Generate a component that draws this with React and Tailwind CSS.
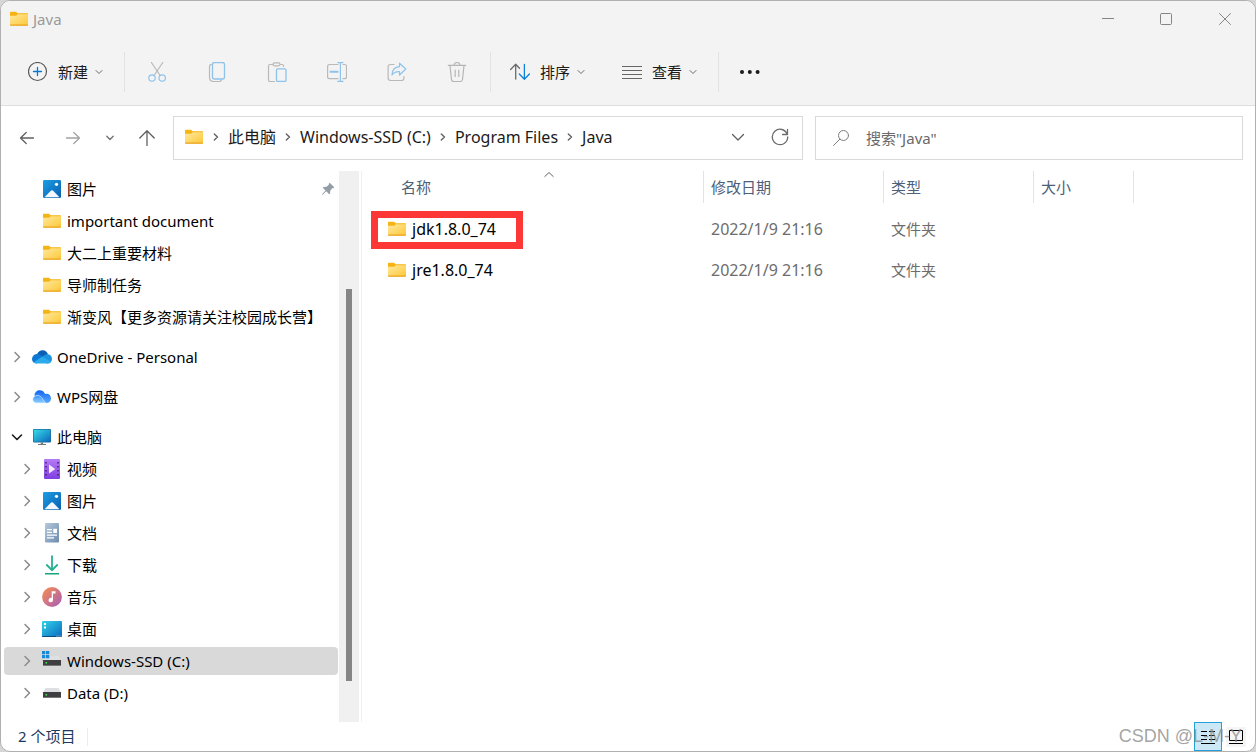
import React from "react";

/* ---------- line icons ---------- */

function Stroke({ size = 20, width = 1, className = "", children }) {
  return (
    <svg
      width={size}
      height={size}
      viewBox={`0 0 ${size} ${size}`}
      fill="none"
      stroke="currentColor"
      strokeWidth={width}
      strokeLinecap="round"
      strokeLinejoin="round"
      aria-hidden="true"
      className={`shrink-0 ${className}`}
    >
      {children}
    </svg>
  );
}

const SmallChevron = () => (
  <Stroke size={8} className="text-[#6b6b6b]">
    <path d="M1 2.5 4 5.5 7 2.5" />
  </Stroke>
);

const NewIcon = () => (
  <Stroke>
    <circle cx="9.5" cy="9.5" r="9" stroke="#5a5a5a" strokeWidth="1.2" />
    <path d="M9.5 5.500v8M5.500 9.500h8" stroke="#0a78cf" strokeWidth="1.3" />
  </Stroke>
);

const CutIcon = () => (
  <Stroke>
    <path d="M4.4.5 13 13.2M15.8.5 7.200 13.2" stroke="#b5b5b5" strokeWidth="1.1" />
    <circle cx="5" cy="16" r="3.200" stroke="#8ec3ec" strokeWidth="1.2" />
    <circle cx="15.200" cy="16" r="3.200" stroke="#8ec3ec" strokeWidth="1.2" />
  </Stroke>
);

const CopyIcon = () => (
  <Stroke>
    <path d="M4.500 2.300C3 2.500 2.500 3.300 2.500 4.500V15c0 3 1.500 4.500 4.200 4.500h5.500c1.200 0 2-.5 2.300-1.800" stroke="#b9b9b9" strokeWidth="1.200" />
    <rect x="5.500" y="0.500" width="12" height="16.500" rx="2" stroke="#8ec3ec" strokeWidth="1.300" />
  </Stroke>
);

const PasteIcon = () => (
  <Stroke>
    <path d="M6 2.500H3c-1 0-1.500.6-1.500 1.500v14c0 .9.6 1.500 1.500 1.500h4.500M13.500 2.500H15c1 0 1.500.6 1.500 1.300v.7" stroke="#b9b9b9" strokeWidth="1.200" />
    <rect x="6" y="0.800" width="7" height="3" rx="1.500" stroke="#b9b9b9" strokeWidth="1.200" />
    <rect x="9.500" y="6.800" width="9.500" height="12.700" rx="1.200" stroke="#8ec3ec" strokeWidth="1.300" />
  </Stroke>
);

const RenameIcon = () => (
  <Stroke>
    <path d="M11 2.500H2.500C1.300 2.500.6 3.300.6 4.300v10.500c0 1.200.8 1.900 1.900 1.900H11M16 2.500h1.800c1 0 1.700.8 1.700 1.800v10.500c0 1.200-.7 1.900-1.700 1.900H16" stroke="#b9b9b9" strokeWidth="1.200" />
    <path d="M3.500 9.700h7.200" stroke="#8ec3ec" strokeWidth="2" />
    <path d="M13.400.6v18.800M10.800.6H16M10.800 19.400H16" stroke="#8ec3ec" strokeWidth="1.200" />
  </Stroke>
);

const ShareIcon = () => (
  <Stroke>
    <path d="M7 2.500H3.500c-1.600 0-2.400.9-2.400 2.300v11c0 1.700.9 2.700 2.500 2.700h10.800c1.700 0 2.600-1 2.600-2.500v-1.500" stroke="#b9b9b9" strokeWidth="1.200" />
    <path d="M12.500 1.200 18.800 7l-6.300 6v-3.300c-3.800-.2-6 1-7.500 3.300.2-4.700 2.800-8 7.500-8.300Z" stroke="#8ec3ec" strokeWidth="1.200" />
  </Stroke>
);

const TrashIcon = () => (
  <Stroke>
    <path d="M1.300 3.300h17.400M7 3C7.200 1.400 8.500.5 10 .5s2.800.9 3 2.500M3 3.500l1.500 14c.1 1.200 1 2 2.200 2h6.600c1.200 0 2-.8 2.200-2L17 3.500M8.200 8v6.500M11.800 8v6.500" stroke="#b5b5b5" strokeWidth="1.200" />
  </Stroke>
);

const SortIcon = () => (
  <Stroke>
    <path d="M5.700 17V2.500M.6 7.500 5.700 2.300 9.500 6.200" stroke="#6a6a6a" strokeWidth="1.300" />
    <path d="M14.400 2.500V17M9.300 12l5.100 5.200L19.400 12" stroke="#0f80d7" strokeWidth="1.300" />
  </Stroke>
);

const ListIcon = () => (
  <Stroke>
    <path d="M0 4.500h20M0 8.500h20M0 12.500h20M0 16.500h20" stroke="#666" strokeWidth="1" strokeLinecap="butt" />
  </Stroke>
);

const MoreIcon = () => (
  <svg width="22" height="6" viewBox="0 0 22 6" fill="#1b1b1b" aria-hidden="true">
    <circle cx="3" cy="3" r="2" />
    <circle cx="10.800" cy="3" r="2" />
    <circle cx="18.600" cy="3" r="2" />
  </svg>
);

/* ---------- file type icons ---------- */

const FolderIcon = () => (
  <svg width="20" height="20" viewBox="0 0 20 20" aria-hidden="true" className="shrink-0">
    <defs>
      <linearGradient id="folderFace" x1="0" y1="0" x2="1" y2="1">
        <stop offset="0" stopColor="#ffe8a0" />
        <stop offset="1" stopColor="#fcc836" />
      </linearGradient>
    </defs>
    <path d="M1 3.600Q1 2.800 1.800 2.800H7l1.700 1.500h9.500q.8 0 .8.800V9H1Z" fill="#f5b414" />
    <path d="M1 6.800h6.200L8.800 5.200H19v10.600q0 .7-.7.7H1.700Q1 16.500 1 15.800Z" fill="url(#folderFace)" />
    <path d="M1 15.500h18v.3q0 .9-.8.900H1.800q-.8 0-.8-.9Z" fill="#eaa41f" />
  </svg>
);

const PictureIcon = () => (
  <svg width="20" height="20" viewBox="0 0 20 20" aria-hidden="true" className="shrink-0">
    <defs>
      <linearGradient id="pictureSky" x1="0" y1="0" x2="1" y2="1">
        <stop offset="0" stopColor="#1d9ee4" />
        <stop offset="1" stopColor="#0860b0" />
      </linearGradient>
    </defs>
    <rect x="1" y="1" width="18" height="18" rx="1.300" fill="url(#pictureSky)" />
    <path d="m2.500 18.300 6.600-6.700q.9-.9 1.800 0l6.600 6.700Z" fill="#f2f8fd" />
    <circle cx="14.500" cy="5.300" r="1.600" fill="#fff" />
  </svg>
);

const OneDriveIcon = () => (
  <svg width="20" height="20" viewBox="0 0 20 20" aria-hidden="true" className="shrink-0">
    <path d="M5 7.300C6.300 4.500 8.500 3.200 10.800 3.300c2.500.1 4.500 1.600 5.200 4l-6 3Z" fill="#0a5eb4" />
    <path d="M0 12.200C0 9 2.500 6.800 5.300 6.900c1 0 2 .4 2.700.9l6 3.700-9.500 4.900C1.800 16.300 0 14.500 0 12.200Z" fill="#0f78d4" />
    <path d="M10.500 9.300 14 7.500c3.300-.8 6 1.200 6 4.400 0 2.500-1.800 4.500-4.300 4.500L9 15Z" fill="#1c93df" />
    <path d="m1.500 15.200 8.800-5.400 8.800 5c-.8 1-2 1.600-3.400 1.600H4.700c-1.300 0-2.400-.4-3.200-1.200Z" fill="#2cabec" />
  </svg>
);

const WpsCloudIcon = () => (
  <svg width="20" height="20" viewBox="0 0 20 20" aria-hidden="true" className="shrink-0">
    <defs>
      <linearGradient id="wpsBack" x1="0" y1="0" x2="0" y2="1">
        <stop offset="0" stopColor="#1566f0" />
        <stop offset="1" stopColor="#5aabff" />
      </linearGradient>
      <linearGradient id="wpsFront" x1="0" y1="0" x2="0" y2="1">
        <stop offset="0" stopColor="#3e92fb" />
        <stop offset="1" stopColor="#8bd0ff" />
      </linearGradient>
    </defs>
    <path d="M2.500 8.500C2.500 5.300 5 3.300 7.800 3.300c2.700 0 4.400 1.500 5.200 3.700 3.500-.8 6 1.300 6 4.400 0 2.700-1.800 4.600-4.500 4.600H10Z" fill="url(#wpsBack)" />
    <path d="M4.800 8.400c2.200-.2 3.800.8 5 2.400l3.700 5.200H4.700C2.300 16 .8 14.400.8 12.300c0-2 1.700-3.700 4-3.900Z" fill="url(#wpsFront)" stroke="#eaf4ff" strokeWidth=".6" />
  </svg>
);

const ComputerIcon = () => (
  <svg width="20" height="20" viewBox="0 0 20 20" aria-hidden="true" className="shrink-0">
    <defs>
      <linearGradient id="screenGlow" x1="0" y1="0" x2="1" y2="1">
        <stop offset="0" stopColor="#37dce8" />
        <stop offset="1" stopColor="#0c67bd" />
      </linearGradient>
    </defs>
    <rect x="1" y="2" width="18" height="13.500" rx="1" fill="#1c6c9c" />
    <rect x="1.700" y="2.700" width="16.600" height="12" fill="url(#screenGlow)" />
    <path d="M8.800 15.500h2.400V17H14v1H6v-1h2.800Z" fill="#777" />
  </svg>
);

const VideoIcon = () => (
  <svg width="20" height="20" viewBox="0 0 20 20" aria-hidden="true" className="shrink-0">
    <defs>
      <linearGradient id="filmBody" x1="0" y1="0" x2="0" y2="1">
        <stop offset="0" stopColor="#b57bf5" />
        <stop offset="1" stopColor="#7f3ee0" />
      </linearGradient>
    </defs>
    <rect x="2" y="0" width="16" height="20" rx="1" fill="url(#filmBody)" />
    <path d="M3.200 3h1.600v1.600H3.200Zm0 4h1.600v1.600H3.200Zm0 4h1.600v1.600H3.200Zm0 4h1.600v1.600H3.200ZM15.200 3h1.600v1.600h-1.600Zm0 4h1.600v1.600h-1.600Zm0 4h1.600v1.600h-1.600Zm0 4h1.600v1.600h-1.600Z" fill="#46236f" />
    <path d="M7 5.500 13.300 10 7 14.500Z" fill="#f3eafd" />
  </svg>
);

const DocumentIcon = () => (
  <svg width="20" height="20" viewBox="0 0 20 20" aria-hidden="true" className="shrink-0">
    <defs>
      <linearGradient id="paperBody" x1="0" y1="0" x2="1" y2="1">
        <stop offset="0" stopColor="#b5c9dc" />
        <stop offset="1" stopColor="#6d8bad" />
      </linearGradient>
    </defs>
    <rect x="3" y="0" width="14" height="19.500" rx="1" fill="url(#paperBody)" />
    <path d="M5 6h5v1.200H5Zm0 2.800h5V10H5Zm6.300-3H15V10h-3.700ZM5 11.600h10v1.200H5Zm0 2.600h7v1.200H5Z" fill="#fff" />
  </svg>
);

const DownloadIcon = () => (
  <svg width="20" height="20" viewBox="0 0 20 20" aria-hidden="true" className="shrink-0" fill="none" strokeWidth="1.800">
    <path d="M10 .5v14M4.300 9.500 10 15.200 15.700 9.500" stroke="#22b191" />
    <path d="M3 18.800h14" stroke="#17a57f" strokeWidth="1.600" />
  </svg>
);

const MusicIcon = () => (
  <svg width="20" height="20" viewBox="0 0 20 20" aria-hidden="true" className="shrink-0">
    <defs>
      <linearGradient id="discBody" x1="0" y1="0" x2="1" y2="1">
        <stop offset="0.100" stopColor="#f28a58" />
        <stop offset="1" stopColor="#a85bbb" />
      </linearGradient>
    </defs>
    <circle cx="10" cy="10" r="9.900" fill="url(#discBody)" />
    <path d="M9.700 4.300h3.800v2.200H11v6.600a2.200 2.200 0 1 1-1.300-2Z" fill="#fff" />
  </svg>
);

const DesktopIcon = () => (
  <svg width="20" height="20" viewBox="0 0 20 20" aria-hidden="true" className="shrink-0">
    <defs>
      <linearGradient id="deskBody" x1="0" y1="0" x2="1" y2="1">
        <stop offset="0" stopColor="#32d4e8" />
        <stop offset="1" stopColor="#0a69c0" />
      </linearGradient>
    </defs>
    <rect y="2" width="20" height="16" rx="1" fill="url(#deskBody)" />
    <path d="M0 17h20v.1q0 .9-.9.900H.9q-.9 0-.9-.9Z" fill="#0c4a7e" />
    <path d="M2 4h2v2H2Zm0 3.500h2v2H2Z" fill="#fff" />
    <path d="M14.500 16.700h1v.8h-1Zm2 0h1v.8h-1Zm2 0h.8v.8h-.8Z" fill="#fff" />
  </svg>
);

function DriveIcon({ system = false }) {
  return (
    <svg width="20" height="20" viewBox="0 0 20 20" aria-hidden="true" className="shrink-0">
      <path d="M3.500 5h13L19 9.500H1Z" fill="#dedfe2" />
      <rect x="1" y="9" width="18" height="6" rx=".4" fill="#3f3f41" />
      <path d="M1 14h18v1H1Z" fill="#77787a" />
      <rect x="3.500" y="11" width="1.600" height="1.600" fill="#3be04b" />
      {system && (
        <g>
          <rect width="7.600" height="7.600" fill="#d9d9d9" />
          <path d="M0 0h3.300v3.300H0Zm4 0h3.300v3.300H4ZM0 4h3.300v3.300H0Zm4 0h3.300v3.300H4Z" fill="#1689d8" />
        </g>
      )}
    </svg>
  );
}

const PinIcon = () => (
  <svg width="14" height="14" viewBox="0 0 14 14" aria-hidden="true" className="shrink-0">
    <path d="M8.700.8 13.200 5.300 12.300 6.200 11.500 6 9.300 8.600 9.100 11.500 8.200 12.200 5.300 9.300 1.300 13 .8 12.500 4.500 8.500 1.800 5.800 2.600 5 5.500 4.800 8 2.500 7.800 1.700Z" fill="#929da5" />
  </svg>
);

/* ---------- title bar and command bar ---------- */

function TitleBar() {
  return (
    <header className="flex h-9 items-center justify-between">
      <div className="flex items-center gap-1 pl-2 text-[#9a9a9a]">
        <FolderIcon />
        <h1 className="leading-5">Java</h1>
      </div>
      <div className="flex self-stretch text-[#858585]">
        <button type="button" aria-label="最小化" className="flex w-[58px] items-center justify-center">
          <Stroke size={12}>
            <path d="M0 5.500h12" />
          </Stroke>
        </button>
        <button type="button" aria-label="最大化" className="flex w-[58px] items-center justify-center">
          <Stroke size={12}>
            <rect x=".5" y=".5" width="11" height="11" rx="1" />
          </Stroke>
        </button>
        <button type="button" aria-label="关闭" className="flex w-[60px] items-center justify-center">
          <Stroke size={12}>
            <path d="m.5.5 11 11M11.500.5l-11 11" />
          </Stroke>
        </button>
      </div>
    </header>
  );
}

const fileActions = [
  { label: "剪切", Icon: CutIcon },
  { label: "复制", Icon: CopyIcon },
  { label: "粘贴", Icon: PasteIcon },
  { label: "重命名", Icon: RenameIcon },
  { label: "共享", Icon: ShareIcon },
  { label: "删除", Icon: TrashIcon },
];

const Divider = () => <span className="h-10 w-px bg-[#e2e2e2]" />;

function MenuButton({ Icon, label }) {
  return (
    <button type="button" className="flex items-center text-[#1b1b1b]">
      <Icon />
      <span className="pl-[10px] pr-[7px]">{label}</span>
      <SmallChevron />
    </button>
  );
}

function CommandBar() {
  return (
    <div className="flex h-[69px] items-center border-b border-[#dedede] pt-0.5">
      <div className="pl-[27px] pr-[21px]">
        <MenuButton Icon={NewIcon} label="新建" />
      </div>
      <Divider />
      <div className="flex pl-0.5 pr-[3px]">
        {fileActions.map(({ label, Icon }) => (
          <button key={label} type="button" aria-label={label} disabled className="flex h-10 w-[60px] items-center justify-center">
            <Icon />
          </button>
        ))}
      </div>
      <Divider />
      <div className="flex gap-[37px] pl-[19px] pr-[21px]">
        <MenuButton Icon={SortIcon} label="排序" />
        <MenuButton Icon={ListIcon} label="查看" />
      </div>
      <Divider />
      <button type="button" aria-label="更多" className="ml-3 flex h-10 items-center px-2">
        <MoreIcon />
      </button>
    </div>
  );
}

/* ---------- navigation row ---------- */

const crumbs = ["此电脑", "Windows-SSD (C:)", "Program Files", "Java"];

function NavigationRow() {
  return (
    <div className="flex items-center pb-[11px] pl-[3px] pr-3 pt-[10px]">
      <button type="button" aria-label="后退" className="flex h-10 w-[46px] items-center justify-center text-[#606060]">
        <Stroke size={16} width={1.3}>
          <path d="M14.500 8H1.500M7.200 2.500 1.500 8l5.700 5.500" />
        </Stroke>
      </button>
      <button type="button" aria-label="前进" className="flex h-10 w-[46px] items-center justify-center text-[#a3a3a3]">
        <Stroke size={16} width={1.3}>
          <path d="M1.500 8h13M8.800 2.500 14.500 8l-5.700 5.500" />
        </Stroke>
      </button>
      <button type="button" aria-label="最近的位置" className="flex h-10 w-7 items-center justify-center text-[#707070]">
        <Stroke size={8} width={1.3}>
          <path d="M.8 2.300 4 5.500l3.200-3.200" />
        </Stroke>
      </button>
      <button type="button" aria-label="向上" className="mr-[3px] flex h-10 w-[46px] items-center justify-center text-[#606060]">
        <Stroke size={16} width={1.3}>
          <path d="M8 15.500V.8M.8 8 8 .8 15.200 8" />
        </Stroke>
      </button>

      <div className="flex h-11 min-w-0 flex-[606] items-center border border-[#d9d9d9] pb-0.5 pl-[10px] pr-3">
        <FolderIcon />
        <nav aria-label="地址" className="flex min-w-0 flex-1 items-center whitespace-nowrap text-base leading-5">
          {crumbs.map((crumb) => (
            <React.Fragment key={crumb}>
              <Stroke size={8} width={1.4} className="mx-2 text-[#606060]">
                <path d="M2.300 1 5.500 4 2.300 7" />
              </Stroke>
              <a href="#" className="text-[#1b1b1b]">
                {crumb}
              </a>
            </React.Fragment>
          ))}
        </nav>
        <button type="button" aria-label="以前的位置" className="flex h-10 w-10 items-center justify-center text-[#606060]">
          <Stroke size={14} width={1.3}>
            <path d="M1.500 4.500 7 10l5.500-5.500" />
          </Stroke>
        </button>
        <button type="button" aria-label="刷新" className="ml-3 flex h-10 w-5 items-center justify-center text-[#6d6d6d]">
          <Stroke size={18} width={1.300}>
            <path d="M16.300 6.500A7.700 7.700 0 1 0 16.700 9M16.500 1.500v5h-5" />
          </Stroke>
        </button>
      </div>

      <label className="ml-3 flex h-11 min-w-0 flex-[394] items-center border border-[#d9d9d9] px-4">
        <Stroke size={18} className="text-[#7d7d7d]">
          <circle cx="11.500" cy="6.500" r="5" />
          <path d="M7.800 10.200 1.500 16.500" />
        </Stroke>
        <input
          type="text"
          aria-label="搜索"
          placeholder={'搜索"Java"'}
          className="ml-4 min-w-0 flex-1 bg-transparent outline-none placeholder:text-[#6a6a6a]"
        />
      </label>
    </div>
  );
}

/* ---------- side tree ---------- */

const treeGroups = [
  [
    { label: "图片", Icon: PictureIcon, nested: true, pinned: true },
    { label: "important document", Icon: FolderIcon, nested: true },
    { label: "大二上重要材料", Icon: FolderIcon, nested: true },
    { label: "导师制任务", Icon: FolderIcon, nested: true },
    { label: "渐变风【更多资源请关注校园成长营】", Icon: FolderIcon, nested: true },
  ],
  [{ label: "OneDrive - Personal", Icon: OneDriveIcon, arrow: "closed" }],
  [{ label: "WPS网盘", Icon: WpsCloudIcon, arrow: "closed" }],
  [
    { label: "此电脑", Icon: ComputerIcon, arrow: "open" },
    { label: "视频", Icon: VideoIcon, nested: true, arrow: "closed" },
    { label: "图片", Icon: PictureIcon, nested: true, arrow: "closed" },
    { label: "文档", Icon: DocumentIcon, nested: true, arrow: "closed" },
    { label: "下载", Icon: DownloadIcon, nested: true, arrow: "closed" },
    { label: "音乐", Icon: MusicIcon, nested: true, arrow: "closed" },
    { label: "桌面", Icon: DesktopIcon, nested: true, arrow: "closed" },
    { label: "Windows-SSD (C:)", Icon: () => <DriveIcon system />, nested: true, arrow: "closed", selected: true },
    { label: "Data (D:)", Icon: DriveIcon, nested: true, arrow: "closed" },
  ],
];

function TreeRow({ label, Icon, nested, arrow, pinned, selected }) {
  return (
    <li
      className={`flex h-7 items-center rounded-sm pr-[3px] ${nested ? "pl-[15px]" : "pl-[5px]"} ${
        selected ? "bg-[#d9d9d9]" : ""
      }`}
    >
      {arrow ? (
        <button type="button" aria-label={`${label} ${arrow === "open" ? "折叠" : "展开"}`} className="mr-[7px] flex w-4 justify-center">
          {arrow === "open" ? (
            <Stroke size={12} width={1.6} className="text-[#1b1b1b]">
              <path d="M1.500 4 6 8.500 10.500 4" />
            </Stroke>
          ) : (
            <Stroke size={12} width={1.5} className="text-[#8a8a8a]">
              <path d="M4 1.500 8.500 6 4 10.500" />
            </Stroke>
          )}
        </button>
      ) : (
        <span className="mr-[7px] w-4" />
      )}
      <a href="#" className="flex min-w-0 flex-1 items-center gap-[5px] whitespace-nowrap text-black">
        <Icon />
        <span>{label}</span>
      </a>
      {pinned && <PinIcon />}
    </li>
  );
}

function SideTree() {
  return (
    <aside className="flex w-[361px] shrink-0 border-r border-[#f0f0f0] pr-0.5">
      <nav aria-label="导航窗格" className="flex min-w-0 flex-1 flex-col gap-3 pb-3 pl-[3px] pr-px pt-1">
        {treeGroups.map((group, index) => (
          <ul key={index} className="flex flex-col gap-1">
            {group.map((row) => (
              <TreeRow key={row.label} {...row} />
            ))}
          </ul>
        ))}
      </nav>
      <div className="flex w-5 flex-col items-center bg-[#f0f0f0]">
        <span className="flex-[118]" />
        <span className="w-1.5 flex-[392] bg-[#858585]" />
        <span className="flex-[41]" />
      </div>
    </aside>
  );
}

/* ---------- file list ---------- */

const files = [
  { name: "jdk1.8.0_74", modified: "2022/1/9 21:16", kind: "文件夹", marked: true },
  { name: "jre1.8.0_74", modified: "2022/1/9 21:16", kind: "文件夹" },
];

function HeaderCell({ children, first = false }) {
  return (
    <th scope="col" className="p-0 pb-[5px] font-normal">
      <div className={`relative flex h-8 items-center border-r border-[#e3e3e3] ${first ? "pl-[39px]" : "pl-[7px]"}`}>
        {children}
        {first && (
          <Stroke size={10} className="absolute left-[182px] top-0 text-[#606060]">
            <path d="M.8 5.500 5 1.500l4.200 4" />
          </Stroke>
        )}
      </div>
    </th>
  );
}

function FileList() {
  return (
    <main className="min-w-0 flex-1">
      <table className="w-full table-fixed border-collapse text-left">
        <colgroup>
          <col className="w-[342px]" />
          <col className="w-[180px]" />
          <col className="w-[150px]" />
          <col className="w-[100px]" />
          <col />
        </colgroup>
        <thead className="text-[#4c607a]">
          <tr>
            <HeaderCell first>名称</HeaderCell>
            <HeaderCell>修改日期</HeaderCell>
            <HeaderCell>类型</HeaderCell>
            <HeaderCell>大小</HeaderCell>
            <td />
          </tr>
        </thead>
        <tbody className="text-[#6d6d6d]">
          {files.map((file) => (
            <tr key={file.name} className="h-[41px]">
              <td className="relative p-0 pl-[25px]">
                <a href="#" className="flex items-center gap-[5px] text-base leading-5 text-black">
                  <FolderIcon />
                  {file.name}
                </a>
                {file.marked && (
                  <span className="pointer-events-none absolute left-[9px] top-[3px] h-[38px] w-[152px] border-[7px] border-[#fd3636]" />
                )}
              </td>
              <td className="p-0 pl-[7px] text-base leading-5">{file.modified}</td>
              <td className="p-0 pl-[7px]">{file.kind}</td>
              <td />
              <td />
            </tr>
          ))}
        </tbody>
      </table>
    </main>
  );
}

/* ---------- status bar ---------- */

function StatusBar() {
  return (
    <footer className="relative flex h-[29px] items-center pl-[17px] pr-[9px]">
      <span className="border-r border-[#ececec] pb-0.5 pr-3 leading-4 text-[#1e395b]">2 个项目</span>
      <div className="ml-auto flex h-full items-center gap-1">
        <button type="button" aria-label="详细信息" className="flex h-full w-7 items-center justify-center border border-[#26a0da] bg-[#cce8f6] text-black">
          <svg width="14" height="14" viewBox="0 0 14 14" stroke="currentColor" aria-hidden="true">
            <path d="M0 1.500h6M8 1.500h6M0 5.500h6M8 5.500h6M0 9.500h6M8 9.500h6M0 13.500h14" />
          </svg>
        </button>
        <button type="button" aria-label="大图标" className="flex h-5 w-5 items-center justify-center bg-[#f5f5f5] text-black">
          <svg width="14" height="14" viewBox="0 0 14 14" fill="none" stroke="currentColor" aria-hidden="true">
            <path d="M.5.5h13v10H.5ZM0 13.500h14" />
          </svg>
        </button>
      </div>
      <span className="pointer-events-none absolute right-[13px] top-0.5 font-['Liberation_Sans',sans-serif] text-[18px] leading-6 text-[#8c8c8c]/80">
        CSDN @L-M-Y
      </span>
    </footer>
  );
}

export default function App() {
  return (
    <div className="flex min-h-screen bg-[#d6d6d6] font-['Noto_Sans','Noto_Sans_CJK_SC',sans-serif] text-[15px] leading-5">
      <div className="flex min-w-0 flex-1 flex-col overflow-hidden rounded-[10px] border border-[#b0b0b0] bg-white">
        <div className="bg-[#f3f3f3]">
          <TitleBar />
          <CommandBar />
        </div>
        <NavigationRow />
        <div className="flex flex-1">
          <SideTree />
          <FileList />
        </div>
        <StatusBar />
      </div>
    </div>
  );
}
